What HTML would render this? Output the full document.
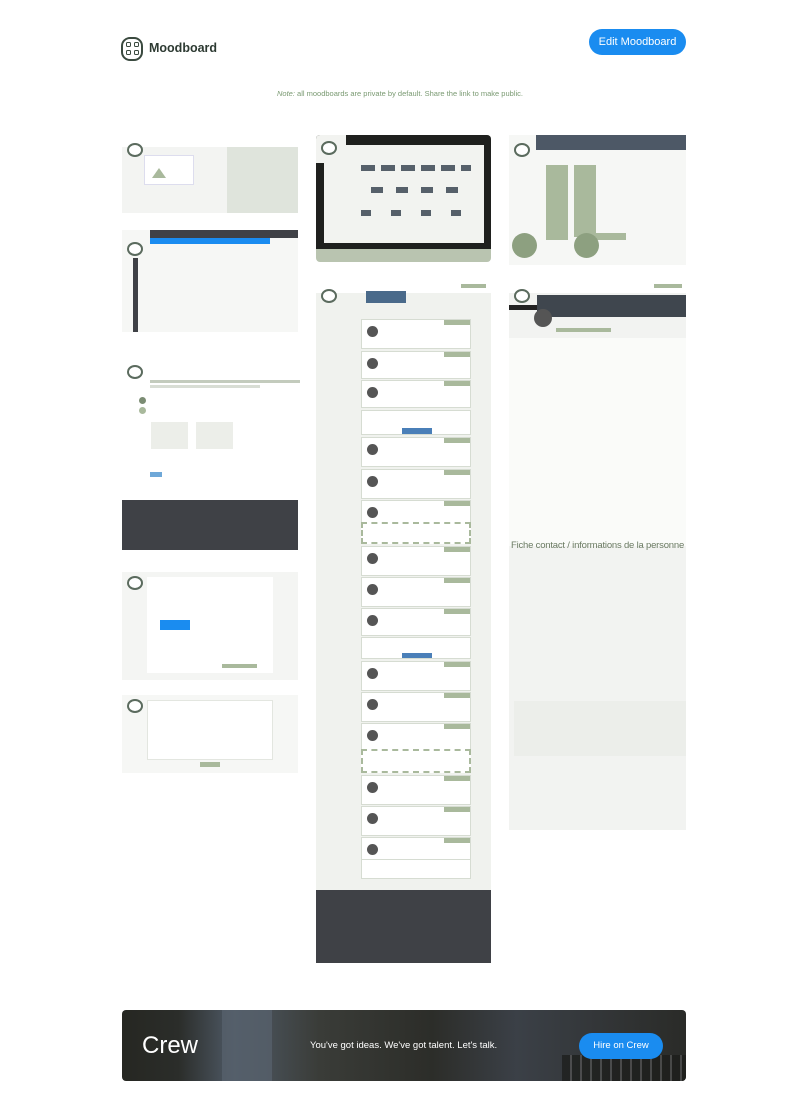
<!DOCTYPE html>
<html><head><meta charset="utf-8">
<style>
*{margin:0;padding:0;box-sizing:border-box}
body{width:800px;height:1110px;background:#fff;font-family:"Liberation Sans",sans-serif;position:relative;overflow:hidden}
.a{position:absolute}
.logo{left:121px;top:37px;width:22px;height:24px;border:2px solid #3a4a3f;border-radius:9px}
.logo i{position:absolute;width:5px;height:5px;border:1.5px solid #3a4a3f;border-radius:1.5px}
.btn{background:#1a8cf0;color:#fff;border-radius:14px;font-size:11px;text-align:center}
.th{background:#f3f4f2;overflow:hidden}
.g{background:#a9b99c}
.ln{position:absolute;height:2px;background:#d8ddd4}
.card{position:absolute;left:45px;width:110px;background:#fff;border:1px solid #d6dcd2}
.card .hd{position:absolute;right:0;top:0;width:26px;height:5px;background:#a9b99c}
.card .av{position:absolute;left:5px;top:6px;width:11px;height:11px;border-radius:50%;background:#555}
.dk{background:#3f4146}
.bub{position:absolute;width:16px;height:14px;border:2px solid #5b6b5e;border-radius:50%;background:#fff}
</style></head><body>

<div class="a logo"><i style="left:3px;top:3px"></i><i style="left:11px;top:3px"></i><i style="left:3px;top:11px"></i><i style="left:11px;top:11px"></i></div>
<div class="a" style="left:149px;top:41px;font-size:12.5px;font-weight:bold;color:#2d3a32">Moodboard</div>
<div class="a btn" style="left:589px;top:29px;width:97px;height:26px;line-height:26px">Edit Moodboard</div>
<div class="a" style="left:0;width:800px;top:89px;text-align:center;font-size:7.5px;color:#7a9a72"><i>Note:</i> all moodboards are private by default. Share the link to make public.</div>

<!-- col1 -->
<div class="a th" style="left:122px;top:133px;width:176px;height:80px">
 <div class="a" style="left:0;top:0;width:176px;height:14px;background:#fff"></div>
 <div class="bub" style="left:5px;top:10px"></div>
 <div class="a" style="left:105px;top:14px;width:71px;height:66px;background:#dfe4dc"></div>
 <div class="a" style="left:22px;top:22px;width:50px;height:30px;background:#fff;border:1px solid #dde"></div>
 <div class="a" style="left:30px;top:35px;width:0;height:0;border-left:7px solid transparent;border-right:7px solid transparent;border-bottom:10px solid #a9b99c"></div>
</div>
<div class="a" style="left:122px;top:230px;width:176px;height:102px;background:#f6f7f5">
 <div class="a dk" style="left:28px;top:0;width:148px;height:8px"></div>
 <div class="a" style="left:28px;top:8px;width:120px;height:6px;background:#1a8cf0"></div>
 <div class="a dk" style="left:11px;top:28px;width:5px;height:74px"></div>
 <div class="bub" style="left:5px;top:12px"></div>
</div>
<div class="a" style="left:122px;top:355px;width:176px;height:195px;background:#fff">
 <div class="bub" style="left:5px;top:10px"></div>
 <div class="a" style="left:28px;top:25px;width:150px;height:3px;background:#c3cbbd"></div>
 <div class="a" style="left:28px;top:30px;width:110px;height:3px;background:#d8ddd4"></div>
 <div class="a" style="left:17px;top:42px;width:7px;height:7px;border-radius:50%;background:#7b8c73"></div>
 <div class="a" style="left:17px;top:52px;width:7px;height:7px;border-radius:50%;background:#a9b99c"></div>
 <div class="a" style="left:29px;top:67px;width:37px;height:27px;background:#eceee9"></div>
 <div class="a" style="left:74px;top:67px;width:37px;height:27px;background:#eceee9"></div>
 <div class="a" style="left:28px;top:117px;width:12px;height:5px;background:#6fa8d8"></div>
 <div class="a dk" style="left:0;top:145px;width:176px;height:50px"></div>
</div>
<div class="a" style="left:122px;top:572px;width:176px;height:108px;background:#f4f5f3">
 <div class="a" style="left:25px;top:5px;width:126px;height:96px;background:#fff"></div>
 <div class="bub" style="left:5px;top:4px"></div>
 <div class="a" style="left:38px;top:48px;width:30px;height:10px;background:#1a8cf0"></div>
 <div class="a g" style="left:100px;top:92px;width:35px;height:4px"></div>
</div>
<div class="a" style="left:122px;top:695px;width:176px;height:78px;background:#f6f7f5">
 <div class="a" style="left:25px;top:5px;width:126px;height:60px;background:#fff;border:1px solid #e3e6e0"></div>
 <div class="bub" style="left:5px;top:4px"></div>
 <div class="a g" style="left:78px;top:67px;width:20px;height:5px"></div>
</div>

<!-- col2 monitor -->
<div class="a" style="left:316px;top:135px;width:175px;height:127px;border-radius:4px;overflow:hidden;background:#b9c4b0">
 <div class="a" style="left:0;top:0;width:175px;height:114px;background:#1f201e"></div>
 <div class="a" style="left:8px;top:10px;width:160px;height:98px;background:#f2f3f0"></div>
 <div class="a" style="left:0;top:0;width:30px;height:28px;background:#f2f3f0"></div>
 <div class="bub" style="left:5px;top:6px"></div>
 <div class="a" style="left:45px;top:30px;width:110px;height:6px;background:repeating-linear-gradient(90deg,#56606a 0 14px,transparent 14px 20px)"></div>
 <div class="a" style="left:55px;top:52px;width:100px;height:6px;background:repeating-linear-gradient(90deg,#56606a 0 12px,transparent 12px 25px)"></div>
 <div class="a" style="left:45px;top:75px;width:110px;height:6px;background:repeating-linear-gradient(90deg,#56606a 0 10px,transparent 10px 30px)"></div>
</div>

<!-- col2 long -->
<div class="a" style="left:316px;top:283px;width:175px;height:680px;background:#f0f2ee">
 <div class="a" style="left:0;top:0;width:175px;height:10px;background:#fff"></div>
 <div class="bub" style="left:5px;top:6px"></div>
 <div class="a" style="left:50px;top:8px;width:40px;height:12px;background:#4a6a8a"></div>
 <div class="a g" style="left:145px;top:1px;width:25px;height:4px"></div>
 <div class="card" style="top:36px;height:30px"><div class="hd"></div><div class="av"></div></div>
 <div class="card" style="top:68px;height:28px"><div class="hd"></div><div class="av"></div></div>
 <div class="card" style="top:97px;height:28px"><div class="hd"></div><div class="av"></div></div>
 <div class="card" style="top:127px;height:25px"><div class="a" style="left:40px;top:17px;width:30px;height:6px;background:#4a7fb8"></div></div>
 <div class="card" style="top:154px;height:30px"><div class="hd"></div><div class="av"></div></div>
 <div class="card" style="top:186px;height:30px"><div class="hd"></div><div class="av"></div></div>
 <div class="card" style="top:217px;height:30px"><div class="hd"></div><div class="av"></div></div>
 <div class="card" style="top:239px;height:22px;border:2px dashed #a9b99c"></div>
 <div class="card" style="top:263px;height:30px"><div class="hd"></div><div class="av"></div></div>
 <div class="card" style="top:294px;height:30px"><div class="hd"></div><div class="av"></div></div>
 <div class="card" style="top:325px;height:28px"><div class="hd"></div><div class="av"></div></div>
 <div class="card" style="top:354px;height:22px"><div class="a" style="left:40px;top:15px;width:30px;height:5px;background:#4a7fb8"></div></div>
 <div class="card" style="top:378px;height:30px"><div class="hd"></div><div class="av"></div></div>
 <div class="card" style="top:409px;height:30px"><div class="hd"></div><div class="av"></div></div>
 <div class="card" style="top:440px;height:35px"><div class="hd"></div><div class="av"></div></div>
 <div class="card" style="top:466px;height:24px;border:2px dashed #a9b99c"></div>
 <div class="card" style="top:492px;height:30px"><div class="hd"></div><div class="av"></div></div>
 <div class="card" style="top:523px;height:30px"><div class="hd"></div><div class="av"></div></div>
 <div class="card" style="top:554px;height:30px"><div class="hd"></div><div class="av"></div></div>
 <div class="card" style="top:576px;height:20px"></div>
 <div class="a dk" style="left:0;top:607px;width:175px;height:73px"></div>
</div>

<!-- col3 -->
<div class="a" style="left:509px;top:135px;width:177px;height:130px;background:#f6f7f5">
 <div class="a" style="left:27px;top:0;width:150px;height:15px;background:#4d5866"></div>
 <div class="bub" style="left:5px;top:8px"></div>
 <div class="a g" style="left:37px;top:30px;width:22px;height:75px"></div>
 <div class="a g" style="left:65px;top:30px;width:22px;height:72px"></div>
 <div class="a g" style="left:87px;top:98px;width:30px;height:7px"></div>
 <div class="a" style="left:3px;top:98px;width:25px;height:25px;border-radius:50%;background:#8da080"></div>
 <div class="a" style="left:65px;top:98px;width:25px;height:25px;border-radius:50%;background:#8da080"></div>
</div>
<div class="a" style="left:509px;top:283px;width:177px;height:547px;background:#f2f3f1">
 <div class="a" style="left:0;top:0;width:177px;height:10px;background:#fff"></div>
 <div class="a" style="left:28px;top:12px;width:149px;height:22px;background:#3f464e"></div>
 <div class="a" style="left:0;top:22px;width:28px;height:5px;background:#222"></div>
 <div class="a" style="left:25px;top:26px;width:18px;height:18px;border-radius:50%;background:#555"></div>
 <div class="bub" style="left:5px;top:6px"></div>
 <div class="a g" style="left:145px;top:1px;width:28px;height:4px"></div>
 <div class="a g" style="left:47px;top:45px;width:55px;height:4px"></div>
 <div class="a" style="left:0;top:55px;width:177px;height:208px;background:#fafbf9"></div>
 <div class="a" style="left:0;top:257px;width:177px;text-align:center;font-size:9.5px;color:#6a7a62;letter-spacing:-.2px">Fiche contact / informations de la personne</div>
 <div class="a" style="left:5px;top:418px;width:172px;height:55px;background:#eceeea"></div>
</div>

<!-- Crew -->
<div class="a" style="left:122px;top:1010px;width:564px;height:71px;border-radius:4px;overflow:hidden;background:linear-gradient(90deg,#262722 0%,#2b2d2a 10%,#4f5a66 20%,#3a3c38 35%,#2c2d29 55%,#3b4047 70%,#2a2b28 100%)">
 <div class="a" style="left:100px;top:0;width:50px;height:71px;background:#56606b;opacity:.8"></div>
 <div class="a" style="left:440px;top:45px;width:130px;height:30px;background:repeating-linear-gradient(90deg,#1a1b18 0 8px,#555 8px 10px);opacity:.7"></div>
 <div class="a" style="left:20px;top:22px;font-size:24px;color:#fff;font-weight:300">Crew</div>
 <div class="a" style="left:188px;top:30px;font-size:9.5px;color:#fff">You've got ideas. We've got talent. Let's talk.</div>
 <div class="a btn" style="left:457px;top:23px;width:84px;height:26px;line-height:26px;border-radius:13px;font-size:9.5px">Hire on Crew</div>
</div>
</body></html>
